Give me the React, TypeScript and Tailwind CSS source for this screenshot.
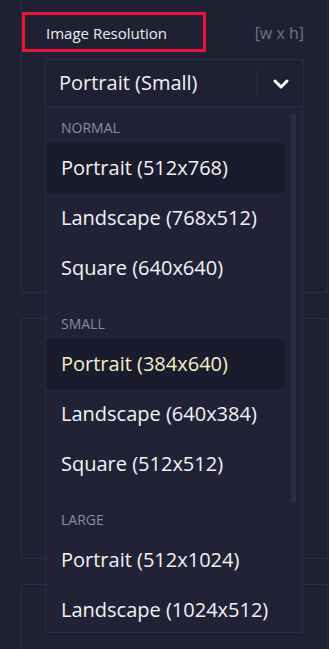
const groups = [
  {
    name: "NORMAL",
    items: ["Portrait (512x768)", "Landscape (768x512)", "Square (640x640)"],
  },
  {
    name: "SMALL",
    items: ["Portrait (384x640)", "Landscape (640x384)", "Square (512x512)"],
  },
  {
    name: "LARGE",
    items: ["Portrait (512x1024)", "Landscape (1024x512)"],
  },
];

const hovered = "Portrait (512x768)";
const selected = "Portrait (384x640)";

function Chevron() {
  return (
    <svg width="16" height="10" viewBox="0 0 16 10" fill="none">
      <path d="M2 2l6 6 6-6" stroke="#ffffff" strokeWidth="3" strokeLinecap="round" strokeLinejoin="round" />
    </svg>
  );
}

function Menu() {
  return (
    <div className="absolute left-[23px] top-[107px] w-[258px] h-[526px] flex bg-[#212236] border-x border-b border-[#2a2c40] overflow-hidden z-10">
      <div className="w-[239px] flex flex-col">
        {groups.map((g, gi) => (
          <div key={g.name} className={gi > 0 ? "mt-[10px]" : ""}>
            <div className="h-[36px] pt-[14px] pl-[15px] text-[14px] leading-[14px] text-[#8a8c9a]">
              {g.name}
            </div>
            {g.items.map((it) => (
              <div
                key={it}
                className={
                  "h-[50px] flex items-center pl-[15px] text-[20px] " +
                  (it === hovered || it === selected ? "bg-[#1a1b2c] " : "") +
                  (it === selected ? "text-[#f4f0c8]" : "text-[#f2f2f6]")
                }
              >
                {it}
              </div>
            ))}
          </div>
        ))}
      </div>
      <div className="w-[17px] pt-[6px] pl-[6px]">
        <div className="w-[5px] h-[390px] rounded-full bg-[#2c2e44]" />
      </div>
    </div>
  );
}

export default function App() {
  return (
    <div className="w-[329px] h-[649px] overflow-hidden bg-[#1f2032] pl-[21px] pr-[1px] font-['Open_Sans',sans-serif]">
      <div className="flex flex-col gap-[25px]">
        <div className="relative h-[293px] border border-t-0 border-[#2a2c40] px-[23px]">
          <div className="relative mt-[13px] h-[40px] flex items-center justify-between">
            <span className="text-[15px] font-medium text-[#ececf2] pl-[1px]">Image Resolution</span>
            <span className="text-[16px] text-[#727485]">[w x h]</span>
            <div className="absolute left-[-23px] top-[-1px] w-[184px] h-[40px] border-[3px] border-[#ec1136]" />
          </div>
          <div className="mt-[6px] h-[48px] flex items-center border border-[#2a2c40]">
            <span className="flex-1 pl-[13px] text-[20px] text-[#f2f2f6]">Portrait (Small)</span>
            <div className="w-px h-[28px] bg-[#2c2e42]" />
            <div className="w-[45px] flex justify-center pt-[2px]">
              <Chevron />
            </div>
          </div>
          <Menu />
        </div>
        <div className="h-[241px] border border-[#2a2c40]" />
        <div className="h-[100px] border border-[#2a2c40]" />
      </div>
    </div>
  );
}
